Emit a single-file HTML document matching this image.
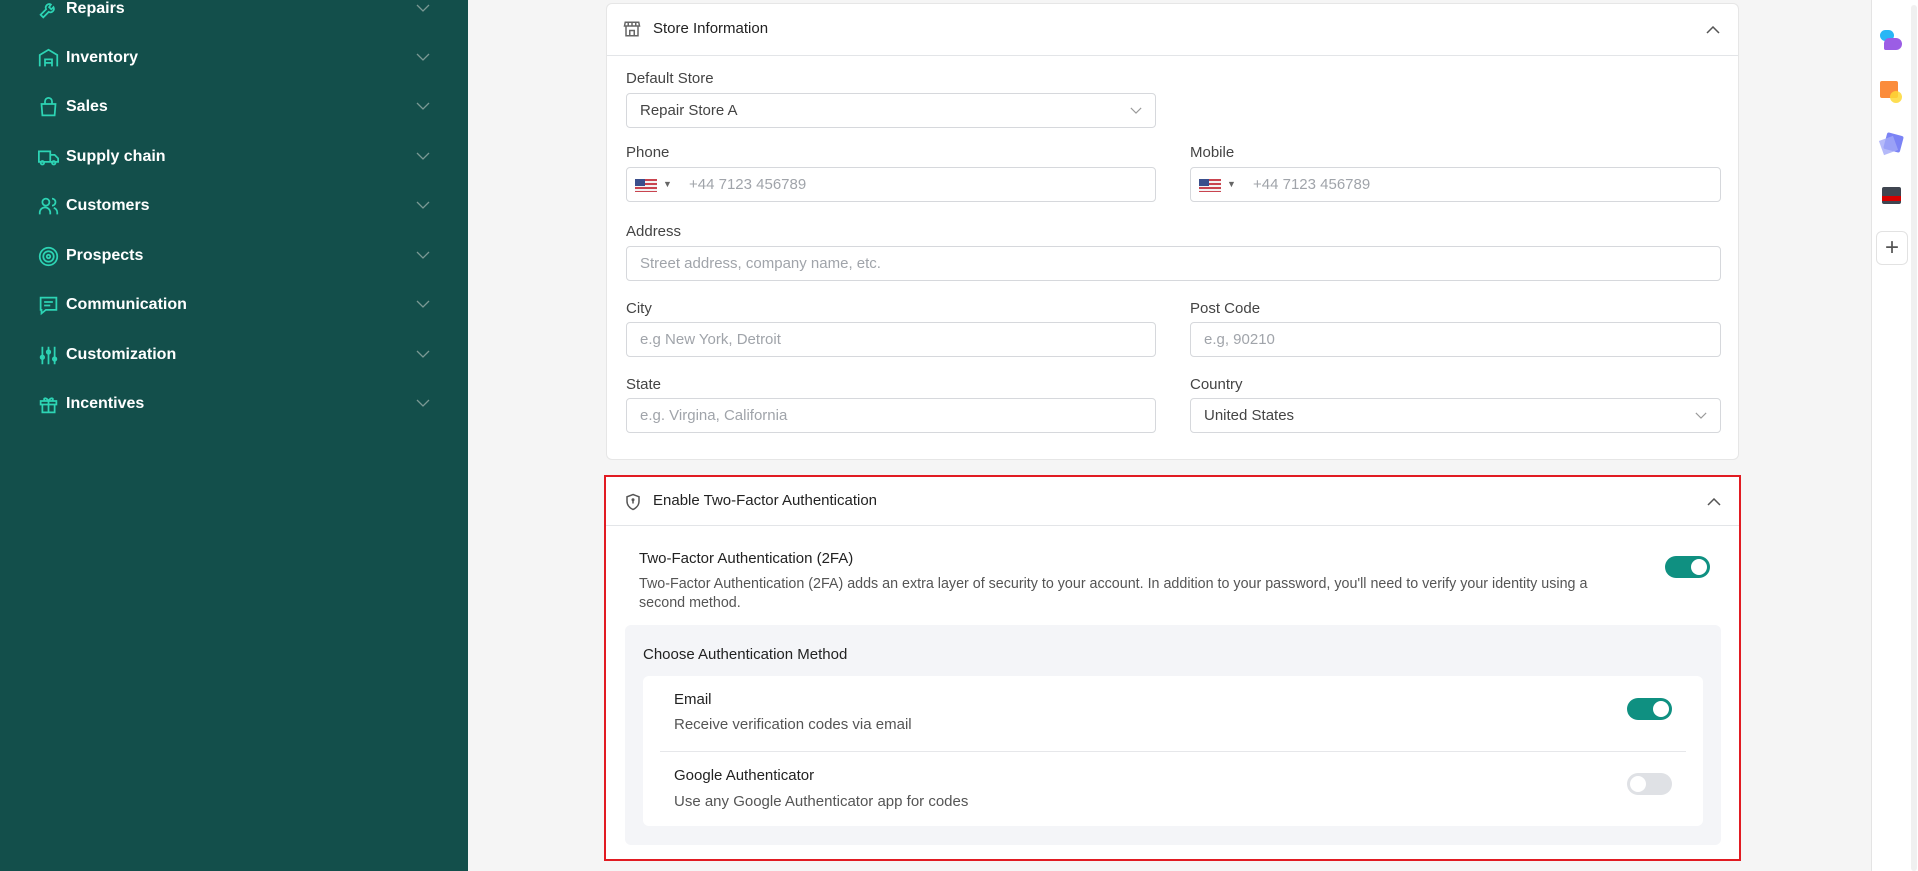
<!DOCTYPE html>
<html><head><meta charset="utf-8"><style>
*{box-sizing:border-box;margin:0;padding:0}
body{width:1918px;height:871px;overflow:hidden;background:#f5f5f5;font-family:"Liberation Sans",sans-serif;position:relative;color:#222}
.sb{position:absolute;left:0;top:0;width:468px;height:871px;background:#134f4b}
.it{position:absolute;left:38px;height:22px;width:400px;color:#fff;font-weight:bold;font-size:16px;line-height:22px}
.it svg.ic{position:absolute;left:0;top:1px}
.it span{position:absolute;left:28px}
.it svg.ch{position:absolute;left:378px;top:6px}
.card{position:absolute;background:#fff;border-radius:6px;border:1px solid #e6e6e6}
.lbl{position:absolute;font-size:15px;color:#444}
.inp{position:absolute;height:35px;border:1px solid #d6d8dc;border-radius:4px;background:#fff;font-size:15px;color:#a0a4aa;line-height:33px;padding-left:13px}
.inp.v{color:#444}
.flag{position:absolute;left:8px;top:11px;width:22px;height:13px;background:repeating-linear-gradient(#c9444f 0 2px,#f3f3f3 2px 4px)}
.flag:before{content:"";position:absolute;left:0;top:0;width:10px;height:7px;background:#3b4f8c}
.tg{position:absolute;width:45px;height:22px;border-radius:11px;background:#0f9081}
.tg:after{content:"";position:absolute;right:3px;top:3px;width:16px;height:16px;border-radius:50%;background:#fff}
.tg.off{background:#dfe1e5}
.tg.off:after{left:3px;right:auto}
</style></head><body>
<div class="sb">
 <div class="it" style="top:-2px"><svg class="ic" width="21" height="21" viewBox="0 0 24 24" fill="none" stroke="#2dd4b4" stroke-width="2"><path d="M14.7 6.3a4 4 0 0 0-5.4 5.4L3 18l3 3 6.3-6.3a4 4 0 0 0 5.4-5.4l-2.5 2.5-2.5-2.5z"/></svg><span>Repairs</span><svg class="ch" width="14" height="8" viewBox="0 0 14 8" fill="none" stroke="#7a9994" stroke-width="1.3"><path d="M1 1l6 6 6-6"/></svg></div>
 <div class="it" style="top:47px"><svg class="ic" width="21" height="21" viewBox="0 0 24 24" fill="none" stroke="#2dd4b4" stroke-width="2"><path d="M2 21V8l10-6 10 6v13M8 21v-8h8v8M8 17h8"/></svg><span>Inventory</span><svg class="ch" width="14" height="8" viewBox="0 0 14 8" fill="none" stroke="#7a9994" stroke-width="1.3"><path d="M1 1l6 6 6-6"/></svg></div>
 <div class="it" style="top:96px"><svg class="ic" width="21" height="21" viewBox="0 0 24 24" fill="none" stroke="#2dd4b4" stroke-width="2"><path d="M4 8h16l-1 13H5zM8 8V5a4 4 0 0 1 8 0v3"/></svg><span>Sales</span><svg class="ch" width="14" height="8" viewBox="0 0 14 8" fill="none" stroke="#7a9994" stroke-width="1.3"><path d="M1 1l6 6 6-6"/></svg></div>
 <div class="it" style="top:146px"><svg class="ic" width="21" height="21" viewBox="0 0 24 24" fill="none" stroke="#2dd4b4" stroke-width="2"><path d="M1 5h13v12H1zM14 9h5l4 4v4h-9"/><circle cx="5" cy="18" r="2"/><circle cx="18" cy="18" r="2"/></svg><span>Supply chain</span><svg class="ch" width="14" height="8" viewBox="0 0 14 8" fill="none" stroke="#7a9994" stroke-width="1.3"><path d="M1 1l6 6 6-6"/></svg></div>
 <div class="it" style="top:195px"><svg class="ic" width="21" height="21" viewBox="0 0 24 24" fill="none" stroke="#2dd4b4" stroke-width="2"><circle cx="9" cy="7" r="4"/><path d="M2 21v-2a6 6 0 0 1 12 0v2M16 3a4 4 0 0 1 0 8M22 21v-2a6 6 0 0 0-4-5.5"/></svg><span>Customers</span><svg class="ch" width="14" height="8" viewBox="0 0 14 8" fill="none" stroke="#7a9994" stroke-width="1.3"><path d="M1 1l6 6 6-6"/></svg></div>
 <div class="it" style="top:245px"><svg class="ic" width="21" height="21" viewBox="0 0 24 24" fill="none" stroke="#2dd4b4" stroke-width="2"><circle cx="12" cy="12" r="10"/><circle cx="12" cy="12" r="6"/><circle cx="12" cy="12" r="2"/></svg><span>Prospects</span><svg class="ch" width="14" height="8" viewBox="0 0 14 8" fill="none" stroke="#7a9994" stroke-width="1.3"><path d="M1 1l6 6 6-6"/></svg></div>
 <div class="it" style="top:294px"><svg class="ic" width="21" height="21" viewBox="0 0 24 24" fill="none" stroke="#2dd4b4" stroke-width="2"><path d="M3 3h18v14H9l-5 4v-4H3zM7 8h10M7 12h7"/></svg><span>Communication</span><svg class="ch" width="14" height="8" viewBox="0 0 14 8" fill="none" stroke="#7a9994" stroke-width="1.3"><path d="M1 1l6 6 6-6"/></svg></div>
 <div class="it" style="top:344px"><svg class="ic" width="21" height="21" viewBox="0 0 24 24" fill="none" stroke="#2dd4b4" stroke-width="2"><path d="M5 2v20M12 2v20M19 2v20"/><circle cx="5" cy="14" r="2"/><circle cx="12" cy="8" r="2"/><circle cx="19" cy="16" r="2"/></svg><span>Customization</span><svg class="ch" width="14" height="8" viewBox="0 0 14 8" fill="none" stroke="#7a9994" stroke-width="1.3"><path d="M1 1l6 6 6-6"/></svg></div>
 <div class="it" style="top:393px"><svg class="ic" width="21" height="21" viewBox="0 0 24 24" fill="none" stroke="#2dd4b4" stroke-width="2"><path d="M3 8h18v4H3zM5 12v9h14v-9M12 8v13M12 8C9 3 5 5 8 8M12 8c3-5 7-3 4 0"/></svg><span>Incentives</span><svg class="ch" width="14" height="8" viewBox="0 0 14 8" fill="none" stroke="#7a9994" stroke-width="1.3"><path d="M1 1l6 6 6-6"/></svg></div>
</div>

<div style="position:absolute;left:1871px;top:0;width:47px;height:871px;background:#fff;border-left:1px solid #e4e4e4"></div>
<div style="position:absolute;left:1911px;top:5px;width:6px;height:866px;background:#f0f0f0;border-radius:3px"></div>
<div style="position:absolute;left:1880px;top:30px;width:14px;height:11px;background:#29b6f6;border-radius:6px"></div>
<div style="position:absolute;left:1884px;top:38px;width:18px;height:12px;background:#9b5de5;border-radius:6px 7px 7px 2px"></div>
<div style="position:absolute;left:1880px;top:81px;width:18px;height:17px;background:#fb8c3c;border-radius:2px"></div>
<div style="position:absolute;left:1890px;top:91px;width:12px;height:12px;background:#fdd835;border-radius:50%;opacity:.85"></div>
<div style="position:absolute;left:1885px;top:134px;width:17px;height:17px;background:#7b83f5;transform:rotate(15deg);border-radius:2px"></div>
<div style="position:absolute;left:1881px;top:138px;width:15px;height:15px;background:#a3a9f8;transform:rotate(-20deg);opacity:.8"></div>
<div style="position:absolute;left:1882px;top:187px;width:19px;height:17px;background:#3f4550;border-radius:2px"></div>
<div style="position:absolute;left:1882px;top:196px;width:19px;height:5px;background:#d50000"></div>
<div style="position:absolute;left:1876px;top:231px;width:32px;height:34px;border:1px solid #e2e2e2;border-radius:6px;color:#555;font-size:24px;text-align:center;line-height:31px">+</div>

<div class="card" style="left:606px;top:3px;width:1133px;height:457px">
 <svg style="position:absolute;left:16px;top:16px" width="18" height="18" viewBox="0 0 24 24" fill="none" stroke="#666" stroke-width="2"><path d="M3 3h18l1 5H2zM4 8v13h16V8M9 21v-7h6v7M7 3v5M12 3v5M17 3v5"/></svg>
 <div style="position:absolute;left:46px;top:16px;font-size:15px;color:#222">Store Information</div>
 <svg style="position:absolute;right:18px;top:22px" width="14" height="8" viewBox="0 0 14 8" fill="none" stroke="#555" stroke-width="1.5"><path d="M1 7l6-6 6 6"/></svg>
 <div style="position:absolute;left:0;right:0;top:51px;border-top:1px solid #e3e5e8"></div>
 <div class="lbl" style="left:19px;top:66px">Default Store</div>
 <div class="inp v" style="left:19px;top:89px;width:530px">Repair Store A<svg style="position:absolute;right:13px;top:13px" width="12" height="7" viewBox="0 0 14 8" fill="none" stroke="#999" stroke-width="1.3"><path d="M1 1l6 6 6-6"/></svg></div>
 <div class="lbl" style="left:19px;top:140px">Phone</div>
 <div class="inp" style="left:19px;top:163px;width:530px;padding-left:62px"><div class="flag"></div><span style="position:absolute;left:36px;top:0;font-size:9px;color:#666">▼</span>+44 7123 456789</div>
 <div class="lbl" style="left:583px;top:140px">Mobile</div>
 <div class="inp" style="left:583px;top:163px;width:531px;padding-left:62px"><div class="flag"></div><span style="position:absolute;left:36px;top:0;font-size:9px;color:#666">▼</span>+44 7123 456789</div>
 <div class="lbl" style="left:19px;top:219px">Address</div>
 <div class="inp" style="left:19px;top:242px;width:1095px">Street address, company name, etc.</div>
 <div class="lbl" style="left:19px;top:296px">City</div>
 <div class="inp" style="left:19px;top:318px;width:530px">e.g New York, Detroit</div>
 <div class="lbl" style="left:583px;top:296px">Post Code</div>
 <div class="inp" style="left:583px;top:318px;width:531px">e.g, 90210</div>
 <div class="lbl" style="left:19px;top:372px">State</div>
 <div class="inp" style="left:19px;top:394px;width:530px">e.g. Virgina, California</div>
 <div class="lbl" style="left:583px;top:372px">Country</div>
 <div class="inp v" style="left:583px;top:394px;width:531px">United States<svg style="position:absolute;right:13px;top:13px" width="12" height="7" viewBox="0 0 14 8" fill="none" stroke="#999" stroke-width="1.3"><path d="M1 1l6 6 6-6"/></svg></div>
</div>

<div class="card" style="left:604px;top:475px;width:1137px;height:386px;border:2px solid #e11b22;border-radius:0">
 <svg style="position:absolute;left:18px;top:15px" width="18" height="20" viewBox="0 0 24 24" fill="none" stroke="#555" stroke-width="2"><path d="M12 2l8 3v6c0 5-3.5 9-8 11-4.5-2-8-6-8-11V5z"/><path d="M12 10v4"/><circle cx="12" cy="9" r="1"/></svg>
 <div style="position:absolute;left:47px;top:15px;font-size:15px;color:#222">Enable Two-Factor Authentication</div>
 <svg style="position:absolute;right:18px;top:21px" width="14" height="8" viewBox="0 0 14 8" fill="none" stroke="#555" stroke-width="1.5"><path d="M1 7l6-6 6 6"/></svg>
 <div style="position:absolute;left:0;right:0;top:48px;border-top:1px solid #e3e5e8"></div>
 <div style="position:absolute;left:33px;top:73px;font-size:15px;color:#222">Two-Factor Authentication (2FA)</div>
 <div style="position:absolute;left:33px;top:98px;width:1020px;font-size:14.3px;color:#555;line-height:19px;white-space:nowrap">Two-Factor Authentication (2FA) adds an extra layer of security to your account. In addition to your password, you'll need to verify your identity using a<br>second method.</div>
 <div class="tg" style="left:1059px;top:79px"></div>
 <div style="position:absolute;left:19px;top:148px;width:1096px;height:220px;background:#f4f5f8;border-radius:6px">
  <div style="position:absolute;left:18px;top:21px;font-size:15px;color:#222">Choose Authentication Method</div>
  <div style="position:absolute;left:18px;top:51px;width:1060px;height:150px;background:#fff;border-radius:6px">
   <div style="position:absolute;left:31px;top:15px;font-size:15px;color:#222">Email</div>
   <div style="position:absolute;left:31px;top:40px;font-size:15px;color:#555">Receive verification codes via email</div>
   <div class="tg" style="left:984px;top:22px"></div>
   <div style="position:absolute;left:17px;right:17px;top:75px;border-top:1px solid #e6e7ea"></div>
   <div style="position:absolute;left:31px;top:91px;font-size:15px;color:#222">Google Authenticator</div>
   <div style="position:absolute;left:31px;top:117px;font-size:15px;color:#555">Use any Google Authenticator app for codes</div>
   <div class="tg off" style="left:984px;top:97px"></div>
  </div>
 </div>
</div>
</body></html>
